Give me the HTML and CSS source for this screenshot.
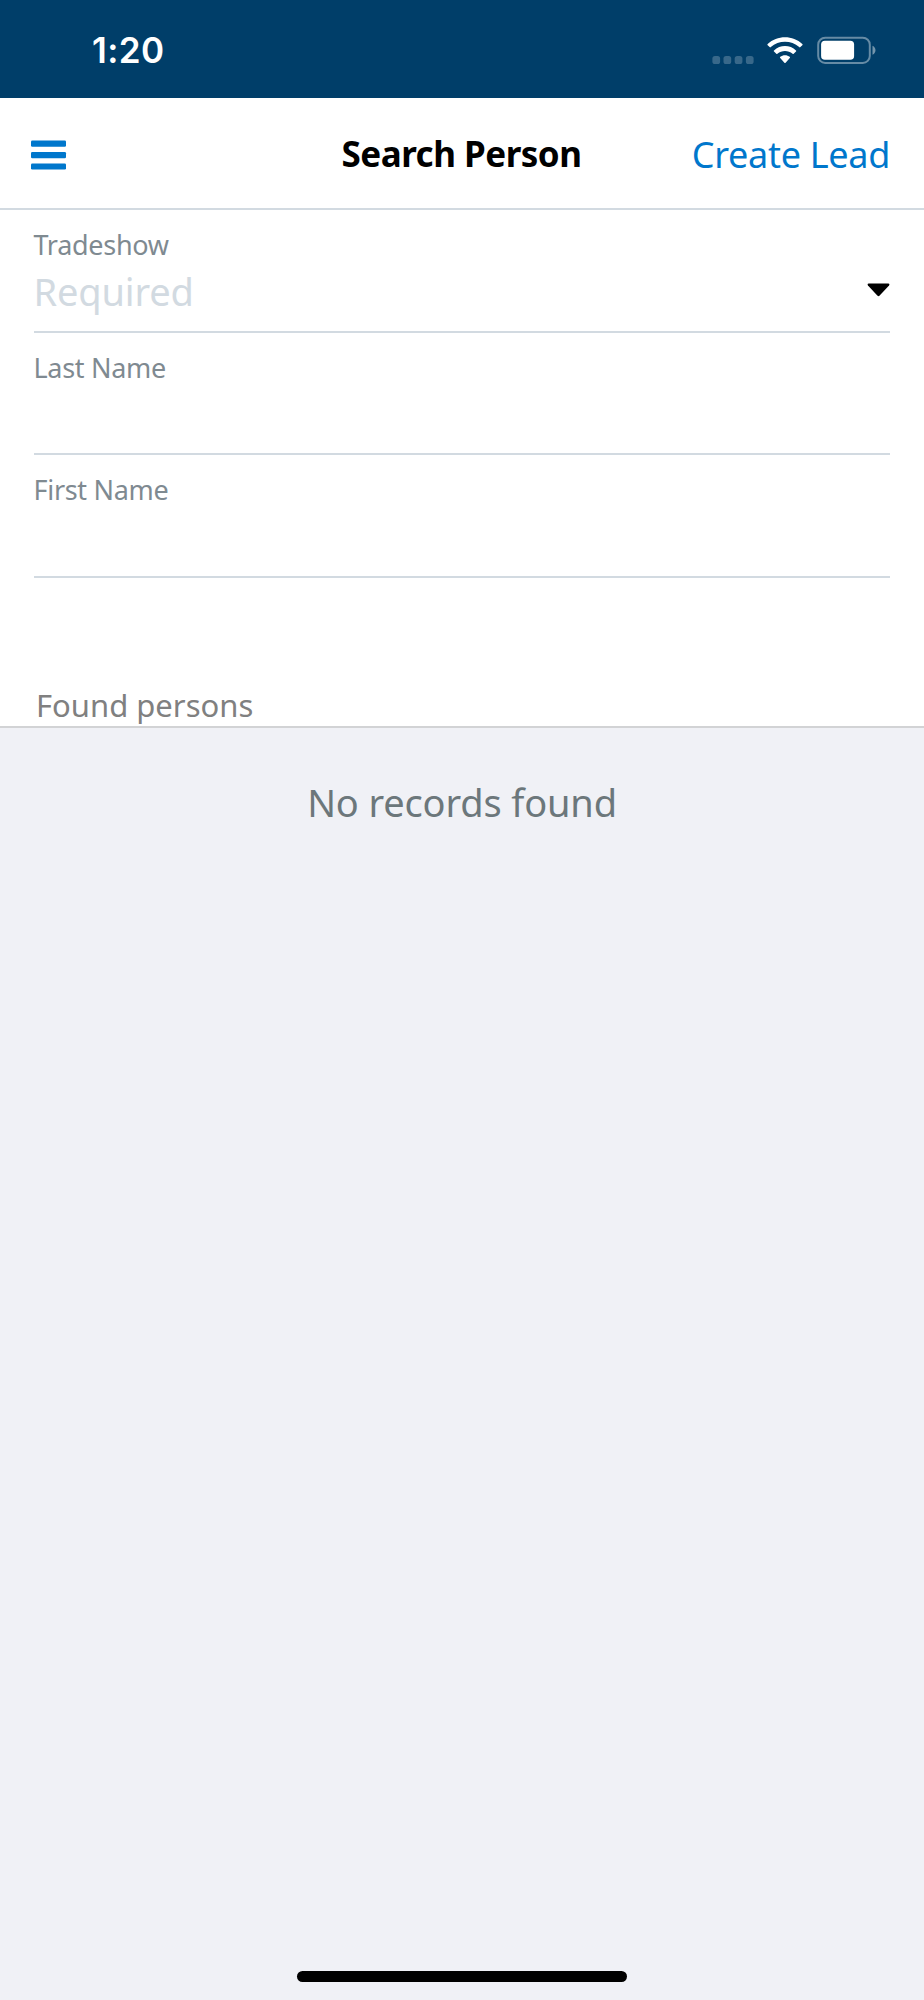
FILE: index.html
```html
<!DOCTYPE html>
<html lang="en">
<head>
<meta charset="utf-8">
<title>Search Person</title>
<link rel="stylesheet" href="styles.css">
</head>
<body>
<div class="screen">
  <div class="status-bar">
    <span class="time">1:20</span>
    <div class="indicators">
      <svg class="signal" width="42" height="8" viewBox="0 0 42 8"><rect x=".4" width="7.7" height="8" rx="2.6"/><rect x="11.5" width="7.7" height="8" rx="2.6"/><rect x="22.7" width="7.7" height="8" rx="2.6"/><rect x="33.9" width="7.7" height="8" rx="2.6"/></svg>
      <svg class="wifi" width="36" height="27" viewBox="0 0 36 27"><path d="M.7 7.1C10-2 26-2 35.3 7.1c.4.4.4.7 0 1.1l-1.9 1.9c-.4.4-.8.4-1.2 0C24.3 2.9 11.7 2.9 3.8 10.1c-.4.4-.8.4-1.2 0L.7 8.2c-.4-.4-.4-.7 0-1.1z"/><path d="M7 13.4c6-5.8 16-5.8 22 0 .4.4.4.8 0 1.1l-2.3 2.2c-.4.4-.7.4-1.1 0-4.4-3.7-10.8-3.7-15.2 0-.4.4-.7.4-1.1 0L7 14.5c-.4-.3-.4-.7 0-1.1z"/><path d="M13.3 19.8c2.5-2.1 6.9-2.1 9.4 0 .5.4.5.8.1 1.2l-4.2 4.7c-.4.5-.8.5-1.2 0L13.2 21c-.4-.4-.4-.8.1-1.2z"/></svg>
      <svg class="battery" width="60" height="29" viewBox="0 0 60 29"><rect class="case" x="1.2" y="1.7" width="51.6" height="25.2" rx="7"/><rect x="4.1" y="4.8" width="33" height="19" rx="3.8"/><path class="cap" d="M55.5 9.8c4 1.8 4 7.2 0 9z"/></svg>
    </div>
  </div>
  <header class="nav-bar">
    <svg class="menu" width="36" height="30" viewBox="0 0 36 30"><rect y=".5" width="35" height="6.2" rx="1.3"/><rect y="12" width="35" height="6.2" rx="1.3"/><rect y="23.4" width="35" height="6.2" rx="1.3"/></svg>
    <h1 class="title">Search Person</h1>
    <a class="action">Create Lead</a>
  </header>
  <form class="form">
    <div class="field field-tradeshow">
      <label class="label">Tradeshow</label>
      <div class="value">
        <span class="placeholder">Required</span>
        <svg class="caret" width="23" height="14" viewBox="0 0 24 14"><path d="M1.7 .3h20.6c1 0 1.4 1 .7 1.9L13 13q-1 1-2 0L1 2.2C.3 1.3.7.3 1.7.3z"/></svg>
      </div>
    </div>
    <div class="field field-last"><label class="label">Last Name</label></div>
    <div class="field field-first"><label class="label">First Name</label></div>
  </form>
  <h2 class="section"><span class="section-text">Found persons</span></h2>
  <main class="results">
    <p class="empty">No records found</p>
    <div class="home-bar"></div>
  </main>
</div>
</body>
</html>
```
FILE: styles.css
```css
* { box-sizing: border-box; }
body { margin: 0; background: #fff; font-family: "Noto Sans", sans-serif; }
.screen { display: flex; flex-direction: column; width: 924px; height: 2000px; }
.status-bar {
  display: flex; justify-content: space-between; height: 98px;
  padding: 0 47px 0 92px; background: #003e69; color: #fff;
}
.time { font: 600 35px/101px Inter, sans-serif; letter-spacing: 0.4px; }
.indicators { display: flex; align-items: flex-start; padding-top: 36px; fill: #fff; }
.signal { margin: 20px 13px 0 0; opacity: .22; }
.wifi { margin: 1px 14px 0 0; }
.case { fill: none; stroke: #fff; stroke-width: 2; opacity: .4; }
.cap { opacity: .45; }
.nav-bar {
  display: grid; grid-template-columns: 1fr auto 1fr; align-items: center;
  height: 112px; padding: 0 34px 0 31px; border-bottom: 2px solid #d2dae1;
}
.menu { fill: #0077cc; margin-top: 4px; }
.title { margin: 2px 0 0 2px; font-size: 35px; font-weight: 700; letter-spacing: -0.5px; line-height: 48px; color: #000; }
.action { justify-self: end; margin-top: 3px; font-size: 36px; letter-spacing: -0.3px; line-height: 48px; color: #0077cc; }
.form { padding: 0 34px; }
.field { border-bottom: 2px solid #d2dae1; }
.field-tradeshow { height: 123px; padding-top: 19px; }
.field-last { height: 122px; padding-top: 19px; }
.field-first { height: 123px; padding-top: 19px; }
.label { display: block; margin-left: -0.5px; font-size: 27px; letter-spacing: -0.3px; line-height: 31px; color: #7f8a91; }
.value { display: flex; justify-content: space-between; margin-top: 8px; }
.placeholder { margin-left: -0.5px; font-size: 38px; letter-spacing: -0.15px; line-height: 46px; color: #d2dae1; }
.caret { margin-top: 15px; fill: #000; }
.section {
  display: flex; align-items: flex-end; height: 150px; margin: 0; padding: 0 36px;
  border-bottom: 2px solid #d2d3d5; font-size: 31px; font-weight: 400; line-height: 42px; color: #808080;
}
.results {
  display: flex; flex: 1; flex-direction: column; align-items: center; justify-content: space-between;
  padding: 50px 0 18px; background: #f0f1f6;
}
.empty { margin: 0; font-size: 38px; letter-spacing: -0.15px; line-height: 48px; color: #6c777b; }
.home-bar { width: 330px; height: 11px; border-radius: 6px; background: #000; }
```
